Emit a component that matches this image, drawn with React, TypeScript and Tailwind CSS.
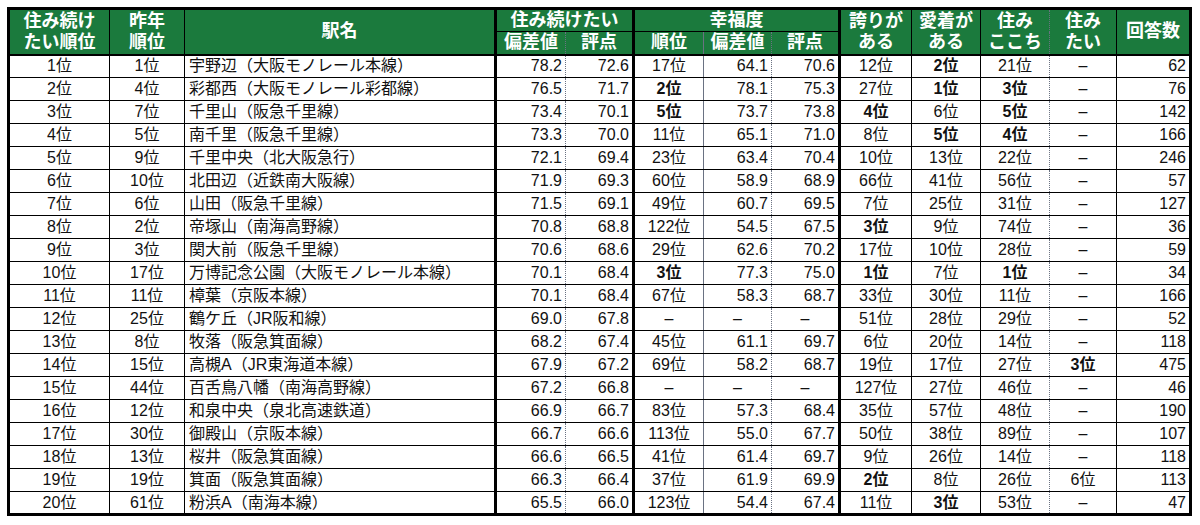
import React from "react";

type Row = {
  r: string; prev: string; name: string;
  s1: string; s2: string;
  h1: string; h2: string; h3: string;
  p: string; a: string; k: string; w: string; n: string;
  bold?: string[];
};

const D = "–";

const rows: Row[] = [
  { r: "1位", prev: "1位", name: "宇野辺（大阪モノレール本線）", s1: "78.2", s2: "72.6", h1: "17位", h2: "64.1", h3: "70.6", p: "12位", a: "2位", k: "21位", w: D, n: "62", bold: ["a"] },
  { r: "2位", prev: "4位", name: "彩都西（大阪モノレール彩都線）", s1: "76.5", s2: "71.7", h1: "2位", h2: "78.1", h3: "75.3", p: "27位", a: "1位", k: "3位", w: D, n: "76", bold: ["h1", "a", "k"] },
  { r: "3位", prev: "7位", name: "千里山（阪急千里線）", s1: "73.4", s2: "70.1", h1: "5位", h2: "73.7", h3: "73.8", p: "4位", a: "6位", k: "5位", w: D, n: "142", bold: ["h1", "p", "k"] },
  { r: "4位", prev: "5位", name: "南千里（阪急千里線）", s1: "73.3", s2: "70.0", h1: "11位", h2: "65.1", h3: "71.0", p: "8位", a: "5位", k: "4位", w: D, n: "166", bold: ["a", "k"] },
  { r: "5位", prev: "9位", name: "千里中央（北大阪急行）", s1: "72.1", s2: "69.4", h1: "23位", h2: "63.4", h3: "70.4", p: "10位", a: "13位", k: "22位", w: D, n: "246" },
  { r: "6位", prev: "10位", name: "北田辺（近鉄南大阪線）", s1: "71.9", s2: "69.3", h1: "60位", h2: "58.9", h3: "68.9", p: "66位", a: "41位", k: "56位", w: D, n: "57" },
  { r: "7位", prev: "6位", name: "山田（阪急千里線）", s1: "71.5", s2: "69.1", h1: "49位", h2: "60.7", h3: "69.5", p: "7位", a: "25位", k: "31位", w: D, n: "127" },
  { r: "8位", prev: "2位", name: "帝塚山（南海高野線）", s1: "70.8", s2: "68.8", h1: "122位", h2: "54.5", h3: "67.5", p: "3位", a: "9位", k: "74位", w: D, n: "36", bold: ["p"] },
  { r: "9位", prev: "3位", name: "関大前（阪急千里線）", s1: "70.6", s2: "68.6", h1: "29位", h2: "62.6", h3: "70.2", p: "17位", a: "10位", k: "28位", w: D, n: "59" },
  { r: "10位", prev: "17位", name: "万博記念公園（大阪モノレール本線）", s1: "70.1", s2: "68.4", h1: "3位", h2: "77.3", h3: "75.0", p: "1位", a: "7位", k: "1位", w: D, n: "34", bold: ["h1", "p", "k"] },
  { r: "11位", prev: "11位", name: "樟葉（京阪本線）", s1: "70.1", s2: "68.4", h1: "67位", h2: "58.3", h3: "68.7", p: "33位", a: "30位", k: "11位", w: D, n: "166" },
  { r: "12位", prev: "25位", name: "鶴ケ丘（JR阪和線）", s1: "69.0", s2: "67.8", h1: D, h2: D, h3: D, p: "51位", a: "28位", k: "29位", w: D, n: "52" },
  { r: "13位", prev: "8位", name: "牧落（阪急箕面線）", s1: "68.2", s2: "67.4", h1: "45位", h2: "61.1", h3: "69.7", p: "6位", a: "20位", k: "14位", w: D, n: "118" },
  { r: "14位", prev: "15位", name: "高槻A（JR東海道本線）", s1: "67.9", s2: "67.2", h1: "69位", h2: "58.2", h3: "68.7", p: "19位", a: "17位", k: "27位", w: "3位", n: "475", bold: ["w"] },
  { r: "15位", prev: "44位", name: "百舌鳥八幡（南海高野線）", s1: "67.2", s2: "66.8", h1: D, h2: D, h3: D, p: "127位", a: "27位", k: "46位", w: D, n: "46" },
  { r: "16位", prev: "12位", name: "和泉中央（泉北高速鉄道）", s1: "66.9", s2: "66.7", h1: "83位", h2: "57.3", h3: "68.4", p: "35位", a: "57位", k: "48位", w: D, n: "190" },
  { r: "17位", prev: "30位", name: "御殿山（京阪本線）", s1: "66.7", s2: "66.6", h1: "113位", h2: "55.0", h3: "67.7", p: "50位", a: "38位", k: "89位", w: D, n: "107" },
  { r: "18位", prev: "13位", name: "桜井（阪急箕面線）", s1: "66.6", s2: "66.5", h1: "41位", h2: "61.4", h3: "69.7", p: "9位", a: "26位", k: "14位", w: D, n: "118" },
  { r: "19位", prev: "19位", name: "箕面（阪急箕面線）", s1: "66.3", s2: "66.4", h1: "37位", h2: "61.9", h3: "69.9", p: "2位", a: "8位", k: "26位", w: "6位", n: "113", bold: ["p"] },
  { r: "20位", prev: "61位", name: "粉浜A（南海本線）", s1: "65.5", s2: "66.0", h1: "123位", h2: "54.4", h3: "67.4", p: "11位", a: "3位", k: "53位", w: D, n: "47", bold: ["a"] },
];

const widths = [101, 75, 311, 70, 68, 70, 68, 68, 72, 69, 69, 67, 74];

export default function App() {
  const b = (row: Row, key: string) => (row.bold && row.bold.includes(key) ? "font-bold" : "");
  const hd = "bg-[#1b7a3d] text-white font-bold text-[18px] leading-[21px] text-center align-middle p-0";
  const dot = "border-r border-r-gray-500 [border-right-style:dotted]";
  return (
    <div className="w-[1200px] h-[525px] bg-white pt-[7px] pl-[7px] font-[Liberation_Sans,Noto_Sans_CJK_JP,sans-serif] text-[#111]">
      <table className="table-fixed border-collapse w-[1182px] border-[3px] border-black">
        <colgroup>
          {widths.map((w, i) => (
            <col key={i} style={{ width: w }} />
          ))}
        </colgroup>
        <thead>
          <tr className="h-[22px]">
            <th rowSpan={2} className={`${hd} border-r border-b-2 border-black`}>
              住み続け<br />たい順位
            </th>
            <th rowSpan={2} className={`${hd} border-r border-b-2 border-black`}>
              昨年<br />順位
            </th>
            <th rowSpan={2} className={`${hd} border-r-[3px] border-b-2 border-black`}>
              駅名
            </th>
            <th colSpan={2} className={`${hd} border-r-[3px] border-b border-black`}>
              住み続けたい
            </th>
            <th colSpan={3} className={`${hd} border-r-[3px] border-b border-black`}>
              幸福度
            </th>
            <th rowSpan={2} className={`${hd} border-r border-b-2 border-black`}>
              誇りが<br />ある
            </th>
            <th rowSpan={2} className={`${hd} border-r border-b-2 border-black`}>
              愛着が<br />ある
            </th>
            <th rowSpan={2} className={`${hd} ${dot} border-b-2 border-b-black`}>
              住み<br />ここち
            </th>
            <th rowSpan={2} className={`${hd} border-r border-b-2 border-black`}>
              住み<br />たい
            </th>
            <th rowSpan={2} className={`${hd} border-b-2 border-black`}>
              回答数
            </th>
          </tr>
          <tr className="h-[23px]">
            <th className={`${hd} ${dot} border-b-2 border-b-black`}>偏差値</th>
            <th className={`${hd} border-r-[3px] border-b-2 border-black`}>評点</th>
            <th className={`${hd} border-r border-r-gray-500 border-b-2 border-b-black`}>順位</th>
            <th className={`${hd} ${dot} border-b-2 border-b-black`}>偏差値</th>
            <th className={`${hd} border-r-[3px] border-b-2 border-black`}>評点</th>
          </tr>
        </thead>
        <tbody className="text-[16px]">
          {rows.map((row, i) => (
            <tr key={i} className="h-[23px] leading-[20px]">
              <td className="border-r border-b border-black text-center p-0">{row.r}</td>
              <td className="border-r border-b border-black text-center p-0">{row.prev}</td>
              <td className="border-r-[3px] border-b border-black text-left pl-[4px] whitespace-nowrap overflow-hidden">{row.name}</td>
              <td className={`${dot} border-b border-b-black text-right pr-[3px] p-0`}>{row.s1}</td>
              <td className="border-r-[3px] border-b border-black text-right pr-[3px] p-0">{row.s2}</td>
              <td className={`border-r border-r-gray-500 border-b border-b-black text-center p-0 ${b(row, "h1")}`}>{row.h1}</td>
              <td className={`${dot} border-b border-b-black p-0 ${row.h2 === D ? "text-center" : "text-right pr-[3px]"}`}>{row.h2}</td>
              <td className={`border-r-[3px] border-b border-black p-0 ${row.h3 === D ? "text-center" : "text-right pr-[3px]"}`}>{row.h3}</td>
              <td className={`border-r border-b border-black text-center p-0 ${b(row, "p")}`}>{row.p}</td>
              <td className={`border-r border-b border-black text-center p-0 ${b(row, "a")}`}>{row.a}</td>
              <td className={`${dot} border-b border-b-black text-center p-0 ${b(row, "k")}`}>{row.k}</td>
              <td className={`border-r border-b border-black text-center p-0 ${b(row, "w")}`}>{row.w}</td>
              <td className="border-b border-black text-right pr-[3px] p-0">{row.n}</td>
            </tr>
          ))}
        </tbody>
      </table>
    </div>
  );
}
